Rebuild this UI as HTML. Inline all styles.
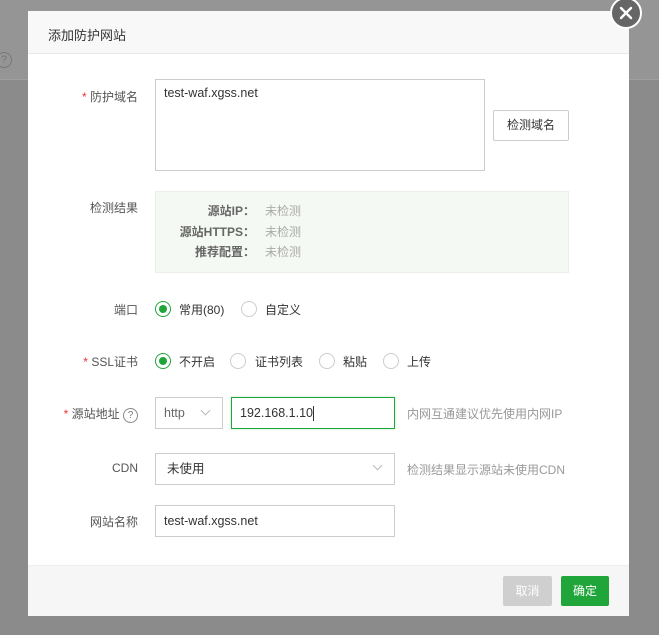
<!DOCTYPE html>
<html><head><meta charset="utf-8"><style>
*{box-sizing:border-box;margin:0;padding:0}
body{width:659px;height:635px;overflow:hidden;background:#8b8b8b;font-family:"Liberation Sans","Noto Sans CJK SC",sans-serif;font-size:12px;color:#333;position:relative}
.a{position:absolute}
.bgtop{left:0;top:0;width:659px;height:80px;background:#959595;border-bottom:1px solid #a0a0a0}
.dlg{left:28px;top:11px;width:601px;height:605px;background:#fff}
.hd{left:0;top:0;width:601px;height:43px;background:#f8f8f8;border-bottom:1px solid #e8e8e8;font-size:13px;padding:14px 0 0 20px;color:#333}
.ft{left:0;top:554px;width:601px;height:51px;background:#f6f6f6;border-top:1px solid #eee}
.lbl{text-align:right;width:110px;left:0;font-size:12px;color:#555}
.req{color:#e33}
.inp{border:1px solid #ccc;background:#fff;padding:0 8px;font-size:12.5px;color:#333}
.rad{width:16px;height:16px;border-radius:50%;border:1px solid #ccc;background:#fff}
.rad.on{border-color:#20a53a}
.rad.on::after{content:"";position:absolute;left:3px;top:3px;width:8px;height:8px;border-radius:50%;background:#20a53a}
.hint{color:#999;font-size:12px}
.chev{width:7px;height:7px;border-right:1px solid #bbb;border-bottom:1px solid #bbb;transform:rotate(45deg)}
</style></head><body>
<div class="a bgtop"></div>
<div class="a" style="left:-4px;top:52px;width:16px;height:16px;border:1px solid #777;border-radius:50%;color:#777;font-size:11px;text-align:center;line-height:14px">?</div>
<div class="a dlg">
 <div class="a hd">添加防护网站</div>
 <div class="a lbl" style="top:77px"><span class="req">* </span>防护域名</div>
 <div class="a inp" style="left:127px;top:68px;width:330px;height:92px;padding-top:6px">test-waf.xgss.net</div>
 <div class="a" style="left:465px;top:99px;width:76px;height:31px;border:1px solid #ccc;border-radius:2px;text-align:center;line-height:29px;color:#333">检测域名</div>
 <div class="a lbl" style="top:188px">检测结果</div>
 <div class="a" style="left:127px;top:180px;width:414px;height:82px;background:#f5f9f3;border:1px solid #eaf0e7"></div>
 <div class="a" style="left:127px;top:190px;width:100px;text-align:right;font-weight:bold;color:#666;line-height:20.5px;white-space:nowrap">源站IP：<br>源站HTTPS：<br>推荐配置：</div>
 <div class="a" style="left:237px;top:190px;color:#aaa;line-height:20.5px">未检测<br>未检测<br>未检测</div>
 <div class="a lbl" style="top:290px">端口</div>
 <div class="a rad on" style="left:127px;top:290px"></div><div class="a" style="left:151px;top:290px">常用(80)</div>
 <div class="a rad" style="left:213px;top:290px"></div><div class="a" style="left:237px;top:290px">自定义</div>
 <div class="a lbl" style="top:342px"><span class="req">* </span>SSL证书</div>
 <div class="a rad on" style="left:127px;top:342px"></div><div class="a" style="left:151px;top:342px">不开启</div>
 <div class="a rad" style="left:202px;top:342px"></div><div class="a" style="left:227px;top:342px">证书列表</div>
 <div class="a rad" style="left:291px;top:342px"></div><div class="a" style="left:315px;top:342px">粘贴</div>
 <div class="a rad" style="left:355px;top:342px"></div><div class="a" style="left:379px;top:342px">上传</div>
 <div class="a" style="left:0;top:394px;width:110px;text-align:right;color:#555"><span class="req">* </span>源站地址 <span style="display:inline-block;width:15px;height:15px;border:1px solid #888;border-radius:50%;text-align:center;line-height:13px;font-size:10px;color:#777">?</span></div>
 <div class="a inp" style="left:127px;top:386px;width:68px;height:32px;line-height:30px;color:#666">http</div>
 <div class="a chev" style="left:174px;top:396px"></div>
 <div class="a inp" style="left:203px;top:386px;width:164px;height:32px;line-height:30px;border-color:#20a53a;box-shadow:0 0 2px #20a53a55">192.168.1.10<span style="display:inline-block;width:1px;height:15px;background:#333;vertical-align:middle"></span></div>
 <div class="a hint" style="left:379px;top:394px">内网互通建议优先使用内网IP</div>
 <div class="a lbl" style="top:450px">CDN</div>
 <div class="a inp" style="left:127px;top:442px;width:240px;height:32px;line-height:30px;padding-left:11px">未使用</div>
 <div class="a chev" style="left:346px;top:451px"></div>
 <div class="a hint" style="left:379px;top:450px">检测结果显示源站未使用CDN</div>
 <div class="a lbl" style="top:502px">网站名称</div>
 <div class="a inp" style="left:127px;top:494px;width:240px;height:32px;line-height:30px">test-waf.xgss.net</div>
 <div class="a ft"></div>
 <div class="a" style="left:475px;top:565px;width:49px;height:30px;background:#cfcfcf;border-radius:2px;color:#fff;text-align:center;line-height:30px">取消</div>
 <div class="a" style="left:533px;top:565px;width:48px;height:30px;background:#20a53a;border-radius:2px;color:#fff;text-align:center;line-height:30px">确定</div>
</div>
<div class="a" style="left:610px;top:-3px;width:32px;height:32px;border-radius:50%;background:#666;border:2px solid #fff"></div>
<svg class="a" style="left:619px;top:6px" width="14" height="14" viewBox="0 0 14 14"><path d="M2 2L12 12M12 2L2 12" stroke="#fff" stroke-width="2.4" stroke-linecap="round"/></svg>
</body></html>
